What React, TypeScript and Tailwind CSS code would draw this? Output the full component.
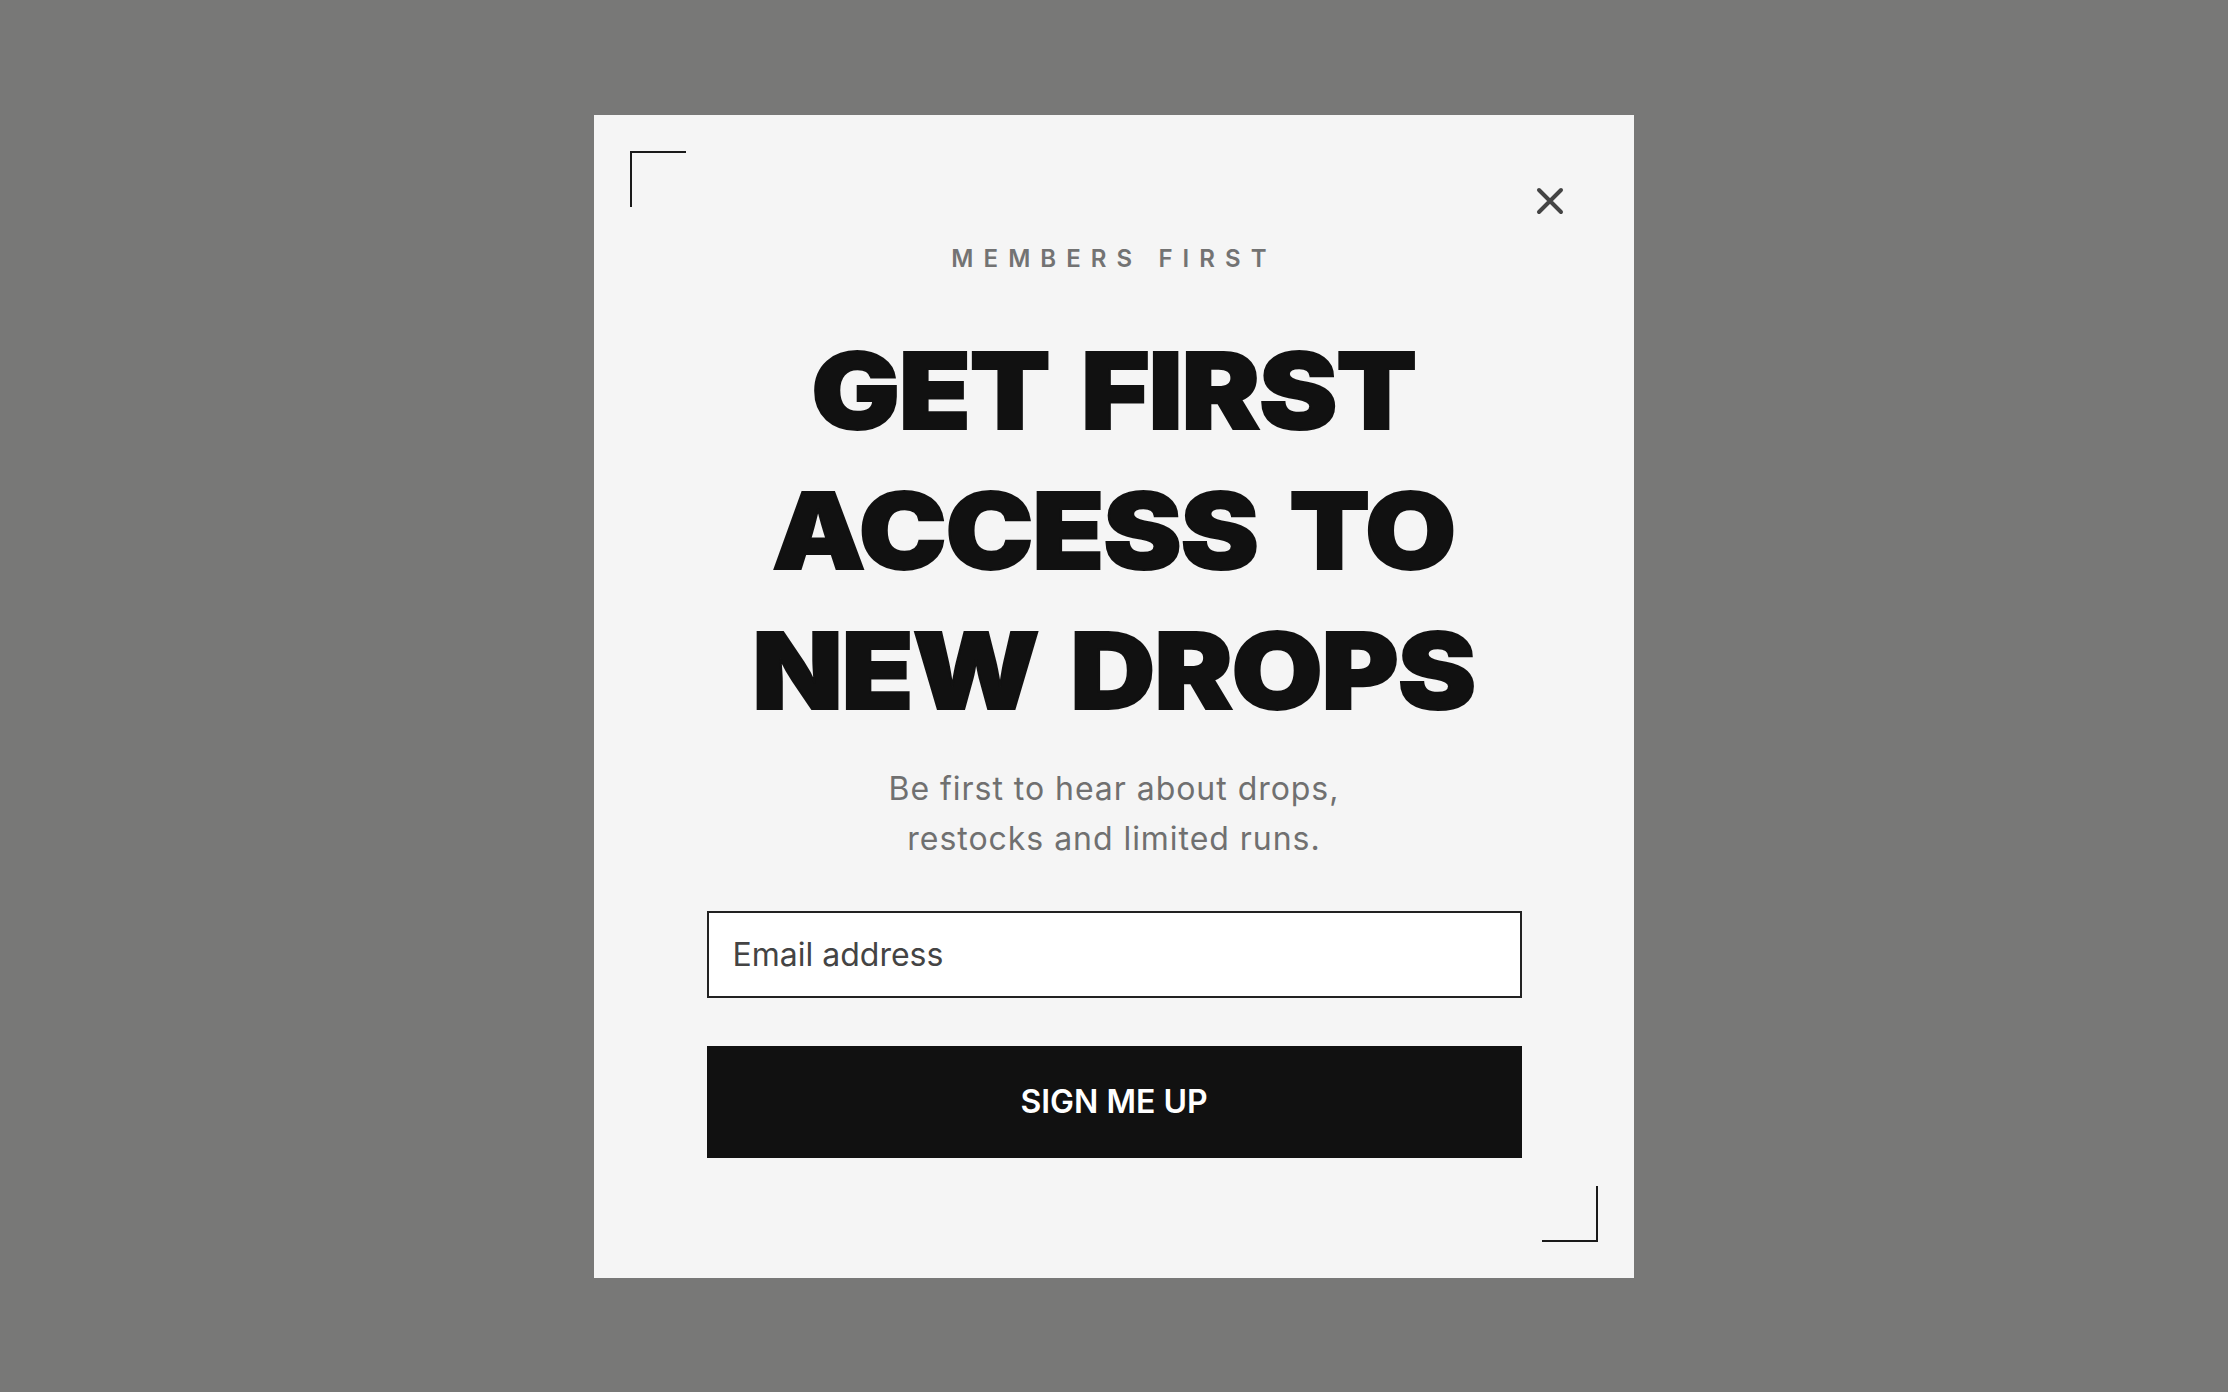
import React from "react";

export default function App() {
  return (
    <div className="flex min-h-screen w-full items-center justify-center bg-[#787877] font-['Inter','Noto_Sans',sans-serif]">
      <SignupModal />
    </div>
  );
}

function SignupModal() {
  return (
    <div className="relative flex w-[1040px] flex-col items-center bg-[#f5f5f5] pt-[128px] pb-[120px] text-center">
      <span className="absolute top-9 left-9 h-14 w-14 border-t-2 border-l-2 border-[#1a1a1a]" />
      <span className="absolute right-9 bottom-9 h-14 w-14 border-r-2 border-b-2 border-[#1a1a1a]" />

      <button
        type="button"
        aria-label="Close"
        className="absolute top-[72px] right-[70px] flex h-7 w-7 items-center justify-center"
      >
        <svg width="28" height="28" viewBox="0 0 28 28" fill="none">
          <path
            d="M3 3 L25 25 M25 3 L3 25"
            stroke="#444444"
            strokeWidth="4"
            strokeLinecap="round"
          />
        </svg>
      </button>

      <p className="text-[24px] leading-[32px] font-semibold tracking-[0.42em] text-[#737373] uppercase">
        Members First
      </p>

      {/* heavy, wide display face: Inter Black widened and thickened */}
      <h1 className="mt-[46px] scale-x-[1.11] text-[106px] leading-[140px] font-black tracking-[-0.01em] text-[#111111] uppercase [word-spacing:0.08em] [-webkit-text-stroke:2px_#111111]">
        Get first
        <br />
        access to
        <br />
        new drops
      </h1>

      <p className="mt-[23px] text-[32px] leading-[50px] tracking-[0.03em] text-[#707070]">
        Be first to hear about drops,
        <br />
        restocks and limited runs.
      </p>

      <form className="mt-[47px] flex w-[815px] flex-col gap-12">
        <input
          type="email"
          placeholder="Email address"
          className="h-[87px] w-full border-2 border-[#222222] bg-white px-6 text-[32px] text-[#333333] outline-none placeholder:text-[#444444]"
        />
        <button
          type="button"
          className="h-[112px] w-full bg-[#111111] text-[32px] font-semibold text-white uppercase"
        >
          Sign me up
        </button>
      </form>
    </div>
  );
}
